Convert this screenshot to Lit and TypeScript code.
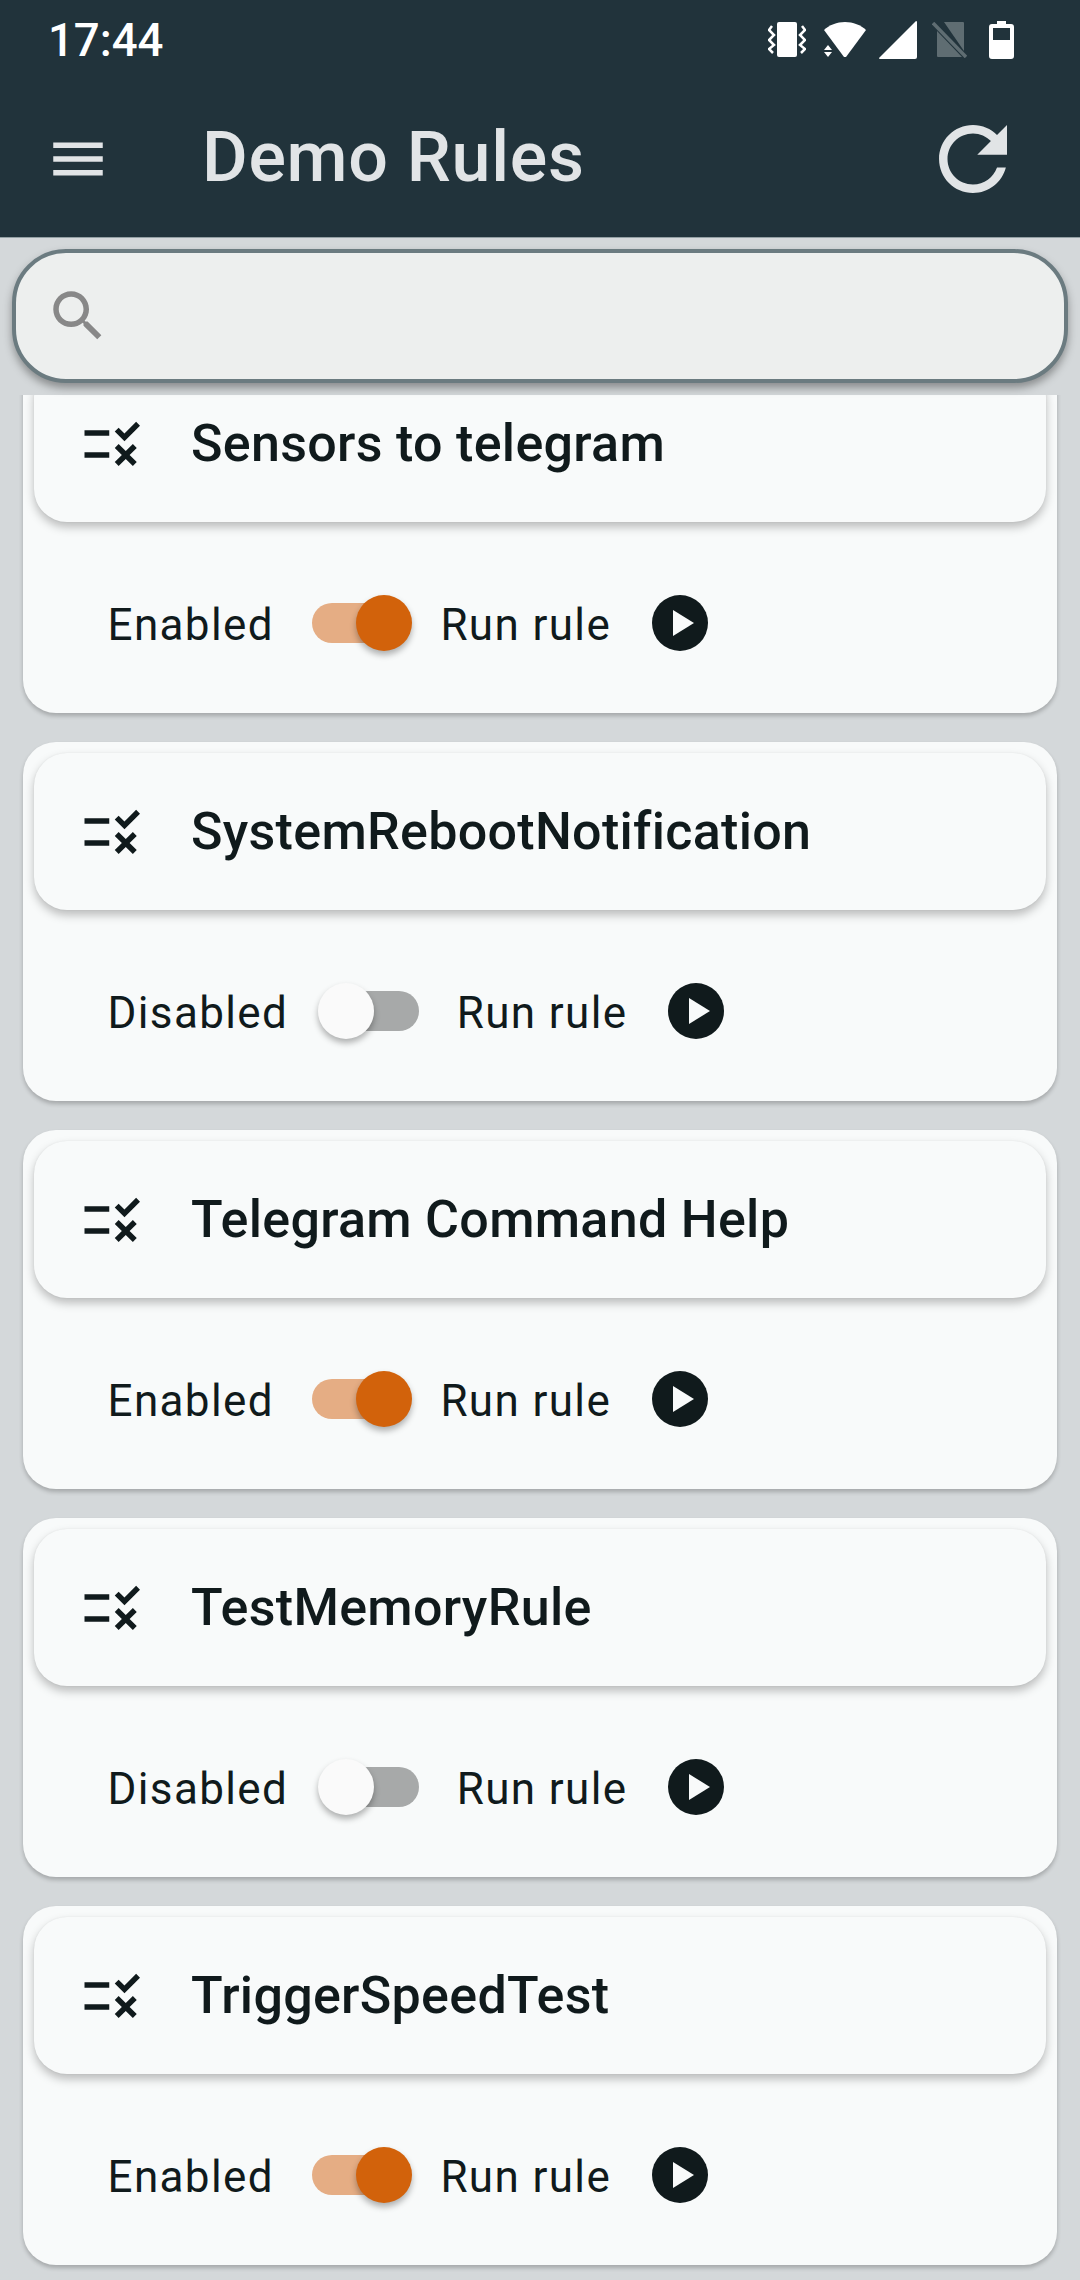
import { LitElement, html, css, svg } from "lit";
import { customElement, property } from "lit/decorators.js";

const RULE_ICON = svg`<path d="M16.54 11 13 7.46l1.41-1.41 2.12 2.12 4.24-4.24 1.41 1.41L16.54 11zM11 7H2v2h9V7zm10 6.41L19.59 12 17 14.59 14.41 12 13 13.41 15.59 16 13 18.59 14.41 20 17 17.41 19.59 20 21 18.59 18.41 16 21 13.41zM11 15H2v2h9v-2z"/>`;

@customElement("rule-card")
class RuleCard extends LitElement {
  @property({ type: String }) name = "";

  @property({ type: Boolean }) enabled = false;

  static styles = css`
    :host {
      display: block;
    }
    .card {
      height: 359px;
      box-sizing: border-box;
      margin: 0 23px;
      padding: 11px 11px 0;
      background: #f8fafa;
      border-radius: 33px;
      box-shadow: 0 3px 4px rgba(0, 0, 0, 0.22);
    }
    .head {
      height: 157px;
      display: flex;
      align-items: center;
      padding-left: 45px;
      background: #f8fafa;
      border-radius: 33px;
      box-shadow: 0 5px 10px rgba(0, 0, 0, 0.25), 0 0 2px rgba(0, 0, 0, 0.06);
    }
    .head svg {
      width: 66px;
      height: 66px;
      fill: #101a1c;
      flex: none;
    }
    .title {
      margin-left: 46px;
      font-size: 52px;
      font-weight: 500;
      letter-spacing: 0.3px;
      line-height: 60px;
      color: #101a1c;
      white-space: nowrap;
    }
    .row {
      display: flex;
      align-items: center;
      height: 56px;
      margin-top: 73px;
      padding-left: 73.5px;
      font-size: 44px;
      letter-spacing: 1.37px;
      color: #101a1c;
      white-space: nowrap;
    }
    .row span {
      position: relative;
      top: 2px;
    }
    .switch {
      position: relative;
      width: 89px;
      height: 40px;
      flex: none;
      margin: 0 37.5px 0 42px;
      border-radius: 20px;
      background: #a7a9a9;
    }
    .switch.on {
      width: 88px;
      margin: 0 40.5px 0 38px;
      background: #e5ad84;
    }
    .knob {
      position: absolute;
      top: -8px;
      left: -12px;
      width: 56px;
      height: 56px;
      border-radius: 50%;
      background: #fafafa;
      box-shadow: 0 4px 6px rgba(0, 0, 0, 0.3);
    }
    .switch.on .knob {
      left: 44px;
      background: #d2620b;
    }
    .play {
      width: 56px;
      height: 56px;
      flex: none;
      margin-left: 41px;
    }
  `;

  render() {
    return html`<div class="card">
      <div class="head">
        <svg viewBox="0 0 24 24">${RULE_ICON}</svg>
        <span class="title">${this.name}</span>
      </div>
      <div class="row">
        <span>${this.enabled ? "Enabled" : "Disabled"}</span>
        <div class="switch ${this.enabled ? "on" : ""}">
          <div class="knob"></div>
        </div>
        <span>Run rule</span>
        <svg class="play" viewBox="0 0 56 56">
          <circle cx="28" cy="28" r="28" fill="#101a1c" />
          <path d="M21 15v26l21-13z" fill="#f8fafa" />
        </svg>
      </div>
    </div>`;
  }
}

@customElement("app-root")
export default class AppRoot extends LitElement {
  @property({ type: Array }) rules = [
    { name: "Sensors to telegram", enabled: true },
    { name: "SystemRebootNotification", enabled: false },
    { name: "Telegram Command Help", enabled: true },
    { name: "TestMemoryRule", enabled: false },
    { name: "TriggerSpeedTest", enabled: true },
  ];

  static styles = css`
    :host {
      display: flex;
      flex-direction: column;
      width: 1080px;
      height: 2280px;
      overflow: hidden;
      background: #d4d8da;
      font-family: Roboto, sans-serif;
    }
    .appbar {
      height: 237px;
      flex: none;
      background: #21333b;
      border-bottom: 1px solid #93a0a4;
      box-sizing: content-box;
    }
    .status {
      height: 80px;
      display: flex;
      align-items: center;
      padding: 0 0 0 48px;
      color: #fff;
      font-size: 45.5px;
      font-weight: 500;
    }
    .status-icons {
      display: flex;
      align-items: center;
      margin-left: auto;
      margin-right: 66px;
    }
    .toolbar {
      height: 157px;
      display: flex;
      align-items: center;
      padding: 0 56px 0 45px;
      color: #e1e4e6;
    }
    .toolbar svg {
      fill: #e1e4e6;
      flex: none;
    }
    .menu {
      width: 66px;
      height: 66px;
    }
    .heading {
      margin-left: 91px;
      margin-top: -3px;
      font-size: 70px;
      font-weight: 500;
      letter-spacing: 0.7px;
    }
    .reload {
      width: 102px;
      height: 102px;
      margin-left: auto;
    }
    .search {
      position: relative;
      z-index: 1;
      flex: none;
      height: 134px;
      box-sizing: border-box;
      margin: 11px 12px 0 12px;
      display: flex;
      align-items: center;
      padding-left: 29px;
      background: #edefee;
      border: 4px solid #6b7b80;
      border-radius: 54px;
      box-shadow: 0 5px 9px rgba(0, 0, 0, 0.35);
    }
    .search svg {
      width: 66px;
      height: 66px;
      fill: #888;
    }
    .scroller {
      flex: 1;
      margin-top: 12px;
      overflow: hidden;
    }
    .list {
      margin-top: -41px;
      display: flex;
      flex-direction: column;
      gap: 29px;
    }
  `;

  renderStatusIcons() {
    return html`<div class="status-icons">
      <svg width="38" height="36" viewBox="0 0 38 36" fill="#fff">
        <rect x="9" y="0" width="20" height="35" rx="2" />
        <path d="M4 4 1 8l5 5-5 5 5 5-5 4 4 4M34 4l3 4-5 5 5 5-5 5 5 4-4 4" fill="none" stroke="#fff" stroke-width="2.5" />
      </svg>
      <svg width="42" height="36" viewBox="0 0 42 36" fill="#fff" style="margin-left:18px">
        <path d="M0 8C5 3 13 0 21 0s16 3 21 8L22 35h-2z" />
        <path d="M4 23l4 5H0zM0 30h8l-4 5z" />
      </svg>
      <svg width="38" height="38" viewBox="0 0 38 38" fill="#fff" style="margin-left:13px">
        <path d="M37 0a1 1 0 0 1 1 1v35a2 2 0 0 1-2 2H1a1 1 0 0 1-1-1z" />
      </svg>
      <svg width="35" height="36" viewBox="0 0 35 36" style="margin-left:15px">
        <path d="M12 0h19a1 1 0 0 1 1 1v28zM5 9v25a1 1 0 0 0 1 1h24z" fill="#5f6d72" />
        <path d="M1 1 34 35" stroke="#5f6d72" stroke-width="3.5" />
      </svg>
      <svg width="25" height="38" viewBox="0 0 25 38" style="margin-left:22px">
        <path d="M8 0h9v3h5a3 3 0 0 1 3 3v29a3 3 0 0 1-3 3H3a3 3 0 0 1-3-3V6a3 3 0 0 1 3-3h5z" fill="#fff" />
        <rect x="4" y="7" width="17" height="12" fill="#21333b" />
      </svg>
    </div>`;
  }

  render() {
    return html`<div class="appbar">
        <div class="status">
          <span>17:44</span>
          ${this.renderStatusIcons()}
        </div>
        <div class="toolbar">
          <svg class="menu" viewBox="0 0 24 24">
            <path d="M3 18h18v-2H3v2zm0-5h18v-2H3v2zm0-7v2h18V6H3z" />
          </svg>
          <span class="heading">Demo Rules</span>
          <svg class="reload" viewBox="0 0 24 24">
            <path d="M17.65 6.35C16.2 4.9 14.21 4 12 4c-4.42 0-7.99 3.58-7.99 8s3.57 8 7.99 8c3.73 0 6.84-2.55 7.73-6h-2.08c-.82 2.33-3.04 4-5.65 4-3.31 0-6-2.69-6-6s2.69-6 6-6c1.66 0 3.14.69 4.22 1.78L13 11h7V4l-2.35 2.35z" />
          </svg>
        </div>
      </div>
      <div class="search">
        <svg viewBox="0 0 24 24">
          <path d="M15.5 14h-.79l-.28-.27C15.41 12.59 16 11.11 16 9.5 16 5.91 13.09 3 9.5 3S3 5.91 3 9.5 5.91 16 9.5 16c1.61 0 3.09-.59 4.23-1.57l.27.28v.79l5 4.99L20.49 19l-4.99-5zm-6 0C7.01 14 5 11.99 5 9.5S7.01 5 9.5 5 14 7.01 14 9.5 11.99 14 9.5 14z" />
        </svg>
      </div>
      <div class="scroller">
        <div class="list">
          ${this.rules.map(
            (rule) =>
              html`<rule-card .name=${rule.name} .enabled=${rule.enabled}></rule-card>`
          )}
        </div>
      </div>`;
  }
}
